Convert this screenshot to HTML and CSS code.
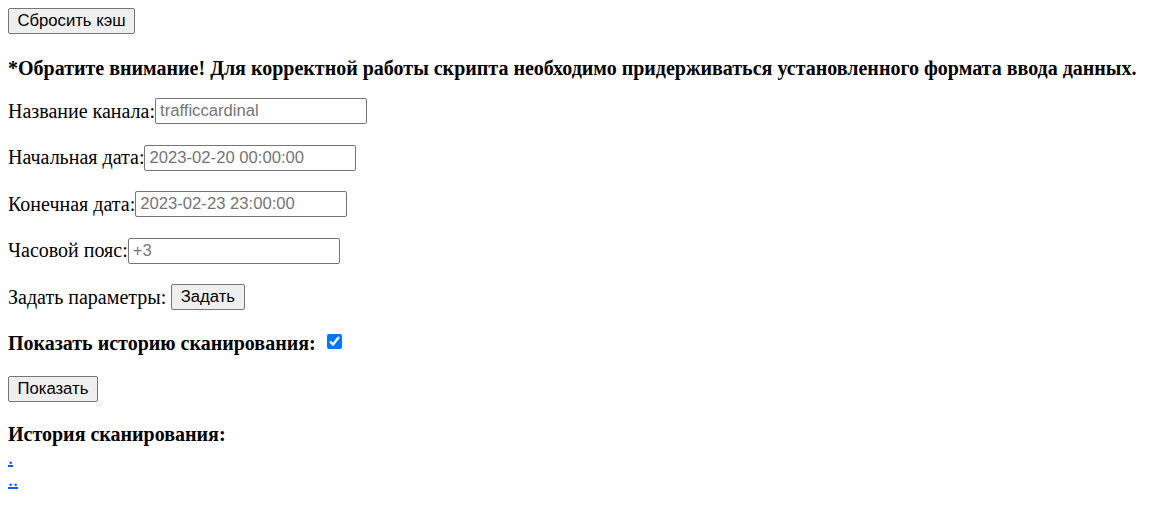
FILE: index.html
```html
<!DOCTYPE html>
<html lang="ru">
<head>
<meta charset="utf-8">
<title>Сканирование</title>
<link rel="stylesheet" href="styles.css">
</head>
<body>
<div class="top"><button class="btn">Сбросить кэш</button></div>
<h4 class="note">*Обратите внимание! Для корректной работы скрипта необходимо придерживаться установленного формата ввода данных.</h4>
<div class="form">
  <div class="row"><label>Название канала:</label><input class="field" type="text" placeholder="trafficcardinal"></div>
  <div class="row"><label>Начальная дата:</label><input class="field" type="text" placeholder="2023-02-20 00:00:00"></div>
  <div class="row"><label>Конечная дата:</label><input class="field" type="text" placeholder="2023-02-23 23:00:00"></div>
  <div class="row"><label>Часовой пояс:</label><input class="field" type="text" placeholder="+3"></div>
  <div class="row"><span class="lbl-sp">Задать параметры:</span><button class="btn">Задать</button></div>
</div>
<h4 class="toggle"><span>Показать историю сканирования:</span><input class="check" type="checkbox" checked></h4>
<div class="show"><button class="btn">Показать</button></div>
<h4 class="history">История сканирования:</h4>
<div class="links">
  <a href="#">.</a>
  <a href="#">..</a>
</div>
</body>
</html>
```
FILE: styles.css
```css
body {
  margin: 8px;
  font-family: "Liberation Serif", "Times New Roman", serif;
  font-size: 20px;
  line-height: 23px;
  color: #000;
  background: #fff;
}
.btn {
  box-sizing: border-box;
  font-family: "Liberation Sans", Arial, sans-serif;
  font-size: 16.67px;
  line-height: 20px;
  height: 26px;
  padding: 1px 8.5px;
  border: 1px solid #767676;
  border-radius: 2px;
  background: #efefef;
  color: #000;
}
.top {
  display: flex;
  height: 26px;
}
.note {
  font-size: 20px;
  font-weight: bold;
  margin: 22.75px 0 0;
}
.form {
  display: flex;
  flex-direction: column;
  gap: 20.5px;
  margin-top: 18.25px;
}
.row {
  display: flex;
  align-items: center;
  height: 26px;
}
.field {
  box-sizing: border-box;
  width: 212px;
  height: 26px;
  font-family: "Liberation Sans", Arial, sans-serif;
  font-size: 16.67px;
  padding: 1px 4px;
  border: 1px solid #767676;
  border-radius: 2px;
  margin: 0;
  background: #fff;
}
.field::placeholder {
  color: #757575;
}
.lbl-sp {
  margin-right: 5px;
}
.toggle {
  display: flex;
  align-items: center;
  height: 23px;
  font-size: 20px;
  margin: 21.75px 0 0;
}
.check {
  width: 15px;
  height: 15px;
  margin: 0 0 3px 11px;
  accent-color: #0075ff;
}
.show {
  display: flex;
  margin-top: 20.75px;
}
.history {
  font-size: 20px;
  margin: 21px 0 0;
}
.links {
  display: flex;
  flex-direction: column;
  align-items: flex-start;
  line-height: 22px;
}
.links a {
  color: #0a5cff;
}
```
